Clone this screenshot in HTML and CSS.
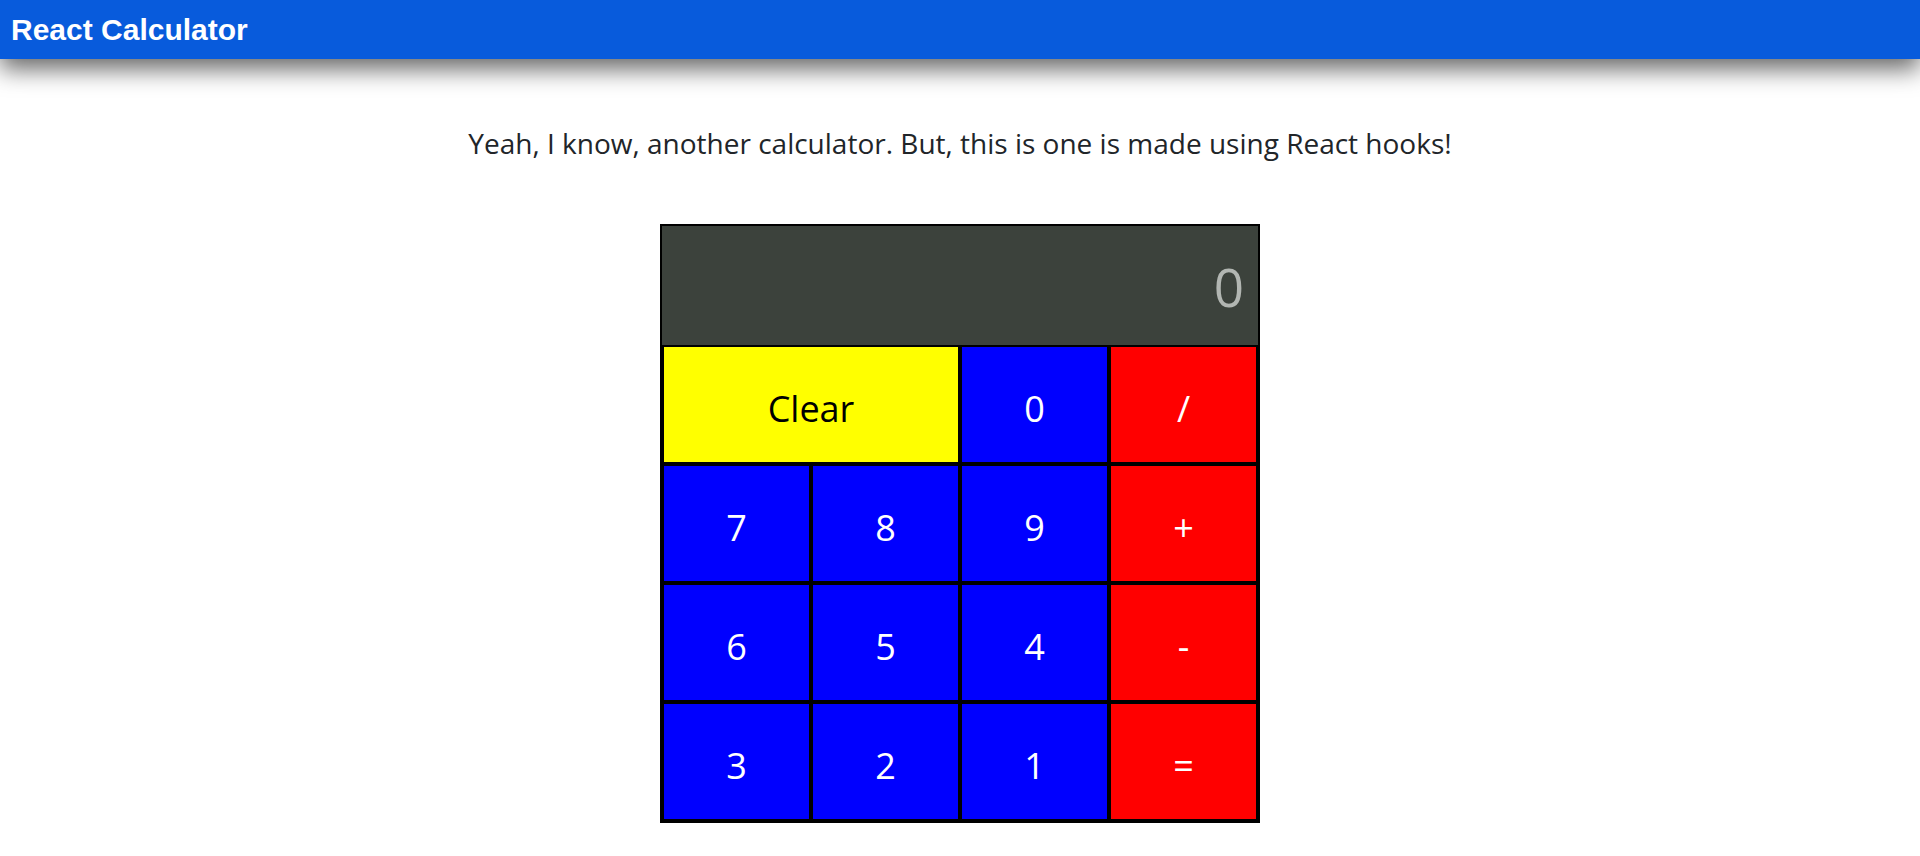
FILE: index.html
```html
<!DOCTYPE html>
<html lang="en">
<head>
<meta charset="utf-8">
<title>React Calculator</title>
<link rel="stylesheet" href="styles.css">
</head>
<body>
<header class="topbar"><span class="brand">React Calculator</span></header>
<main class="page">
  <p class="intro">Yeah, I know, another calculator. But, this is one is made using React hooks!</p>
  <div class="calc">
    <div class="display">0</div>
    <div class="keys">
      <button class="key key-clear">Clear</button>
      <button class="key key-num">0</button>
      <button class="key key-op">/</button>
      <button class="key key-num">7</button>
      <button class="key key-num">8</button>
      <button class="key key-num">9</button>
      <button class="key key-op">+</button>
      <button class="key key-num">6</button>
      <button class="key key-num">5</button>
      <button class="key key-num">4</button>
      <button class="key key-op">-</button>
      <button class="key key-num">3</button>
      <button class="key key-num">2</button>
      <button class="key key-num">1</button>
      <button class="key key-op">=</button>
    </div>
  </div>
</main>
</body>
</html>
```
FILE: styles.css
```css
* { box-sizing: border-box; }
html, body { margin: 0; padding: 0; background: #fff; }
body {
  font-family: "Open Sans", "Noto Sans", sans-serif;
  color: #212529;
}
.topbar {
  height: 59px;
  background: #085bdc;
  display: flex;
  align-items: center;
  padding-left: 11px;
  box-shadow: 0 10px 25px rgba(0, 0, 0, 0.6);
  position: relative;
  z-index: 1;
}
.brand {
  font-family: "Liberation Sans", Arial, sans-serif;
  font-weight: bold;
  font-size: 30px;
  color: #fff;
}
.page {
  display: flex;
  flex-direction: column;
  align-items: center;
  padding-top: 66px;
}
.intro {
  margin: 0 0 63px;
  font-size: 28px;
  line-height: 36px;
}
.calc {
  width: 600px;
  border: 2px solid #000;
}
.display {
  height: 119px;
  background: #3c423c;
  color: #b2b6b2;
  font-size: 53px;
  display: flex;
  align-items: center;
  justify-content: flex-end;
  padding-right: 14px;
  padding-top: 2px;
}
.keys {
  display: grid;
  grid-template-columns: repeat(4, 1fr);
  grid-auto-rows: 119px;
}
.key {
  border: 2px solid #000;
  margin: 0;
  padding: 8px 0 0;
  font-family: inherit;
  font-size: 36px;
  color: #fff;
  cursor: pointer;
}
.key-num { background: #0000ff; }
.key-op { background: #ff0000; }
.key-clear {
  grid-column: span 2;
  background: #ffff00;
  color: #000;
}
```
